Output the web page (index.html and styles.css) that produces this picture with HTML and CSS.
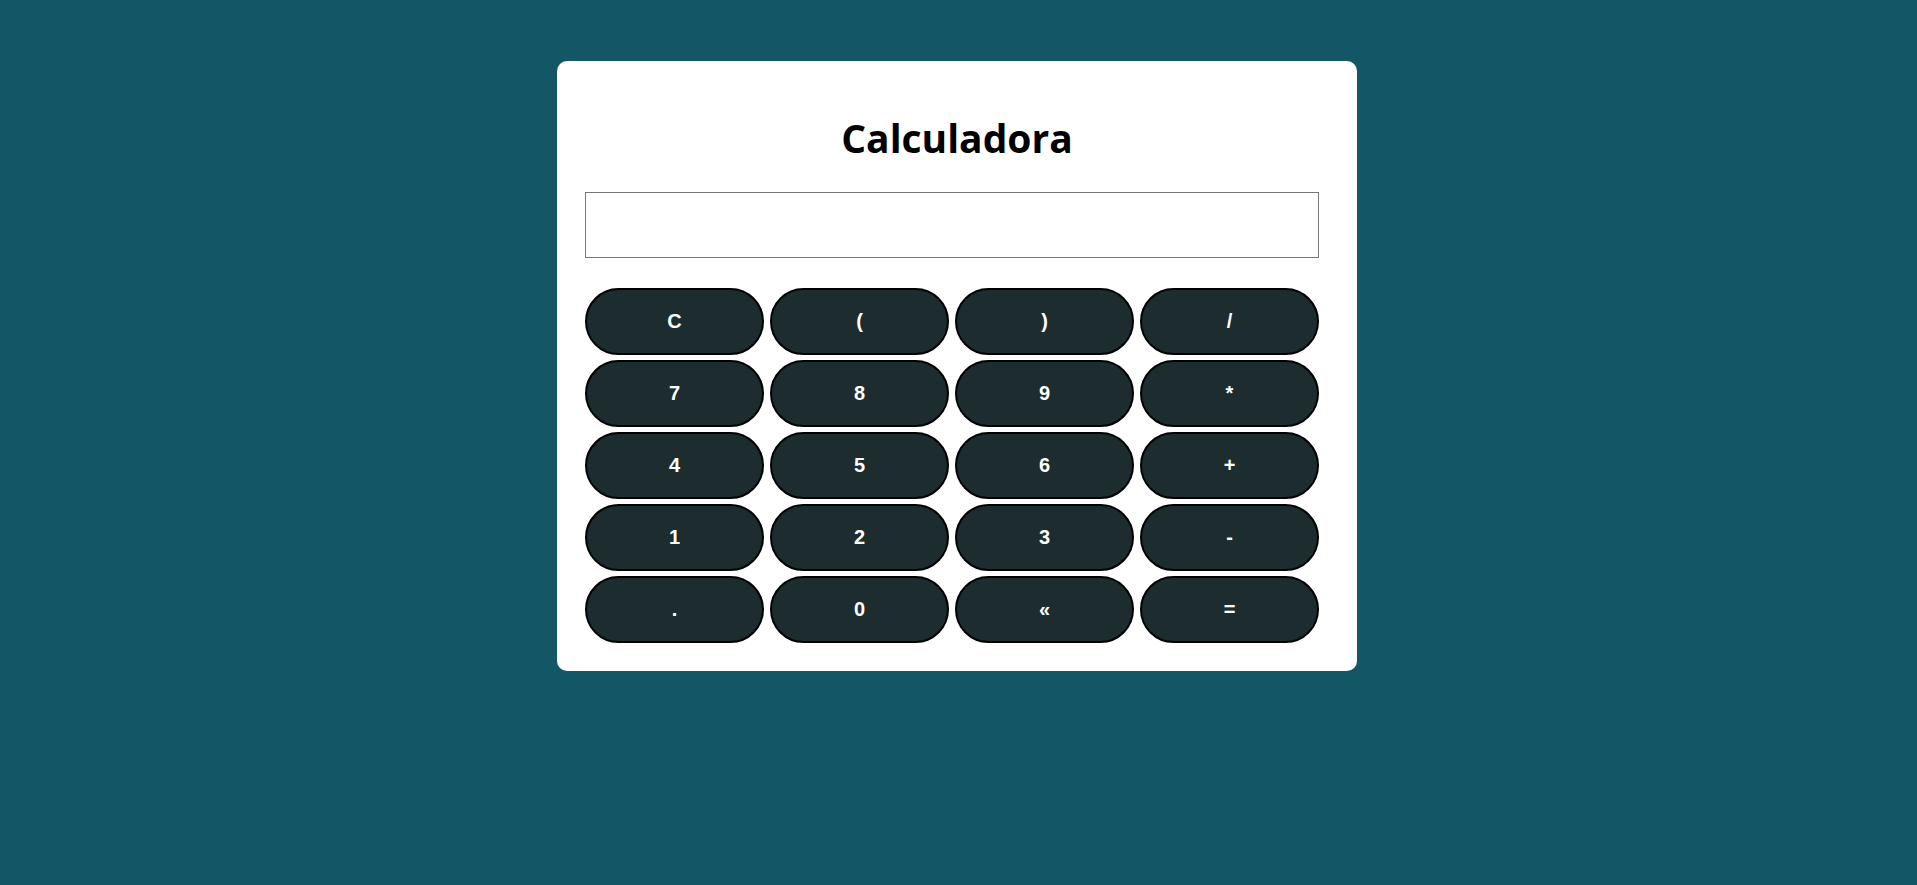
FILE: index.html
```html
<!DOCTYPE html>
<html lang="pt">
<head>
<meta charset="utf-8">
<title>Calculadora</title>
<link rel="stylesheet" href="styles.css">
</head>
<body>
<main class="card">
  <h1 class="title">Calculadora</h1>
  <input class="display" type="text">
  <div class="keys">
    <button class="key">C</button>
    <button class="key">(</button>
    <button class="key">)</button>
    <button class="key">/</button>
    <button class="key">7</button>
    <button class="key">8</button>
    <button class="key">9</button>
    <button class="key">*</button>
    <button class="key">4</button>
    <button class="key">5</button>
    <button class="key">6</button>
    <button class="key">+</button>
    <button class="key">1</button>
    <button class="key">2</button>
    <button class="key">3</button>
    <button class="key">-</button>
    <button class="key">.</button>
    <button class="key">0</button>
    <button class="key">«</button>
    <button class="key">=</button>
  </div>
</main>
</body>
</html>
```
FILE: styles.css
```css
html, body {
  margin: 0;
  padding: 0;
}
body {
  background: #135666;
  min-height: 885px;
  display: flex;
  justify-content: center;
  align-items: flex-start;
  padding-top: 61px;
  box-sizing: border-box;
  padding-right: 3px;
}
.card {
  width: 800px;
  box-sizing: border-box;
  background: #ffffff;
  border-radius: 10px;
  padding: 0 28px 28px 28px;
  display: flex;
  flex-direction: column;
  align-items: flex-start;
}
.title {
  align-self: stretch;
  text-align: center;
  font-family: "Open Sans", "Liberation Sans", sans-serif;
  font-weight: 700;
  font-size: 39px;
  line-height: 52px;
  margin: 51px 0 28px 0;
  color: #000;
}
.display {
  width: 734px;
  height: 66px;
  box-sizing: border-box;
  border: 1px solid #767676;
  margin: 0 0 30px 0;
  padding: 0;
  background: #fff;
}
.keys {
  display: grid;
  grid-template-columns: repeat(4, 179px);
  grid-auto-rows: 67px;
  column-gap: 6px;
  row-gap: 5px;
}
.key {
  background: #1c2c2f;
  color: #ffffff;
  border: 2px solid #000;
  border-radius: 40px;
  font-family: "Liberation Sans", Arial, sans-serif;
  font-weight: 700;
  font-size: 20px;
  padding: 0;
  margin: 0;
}
```
